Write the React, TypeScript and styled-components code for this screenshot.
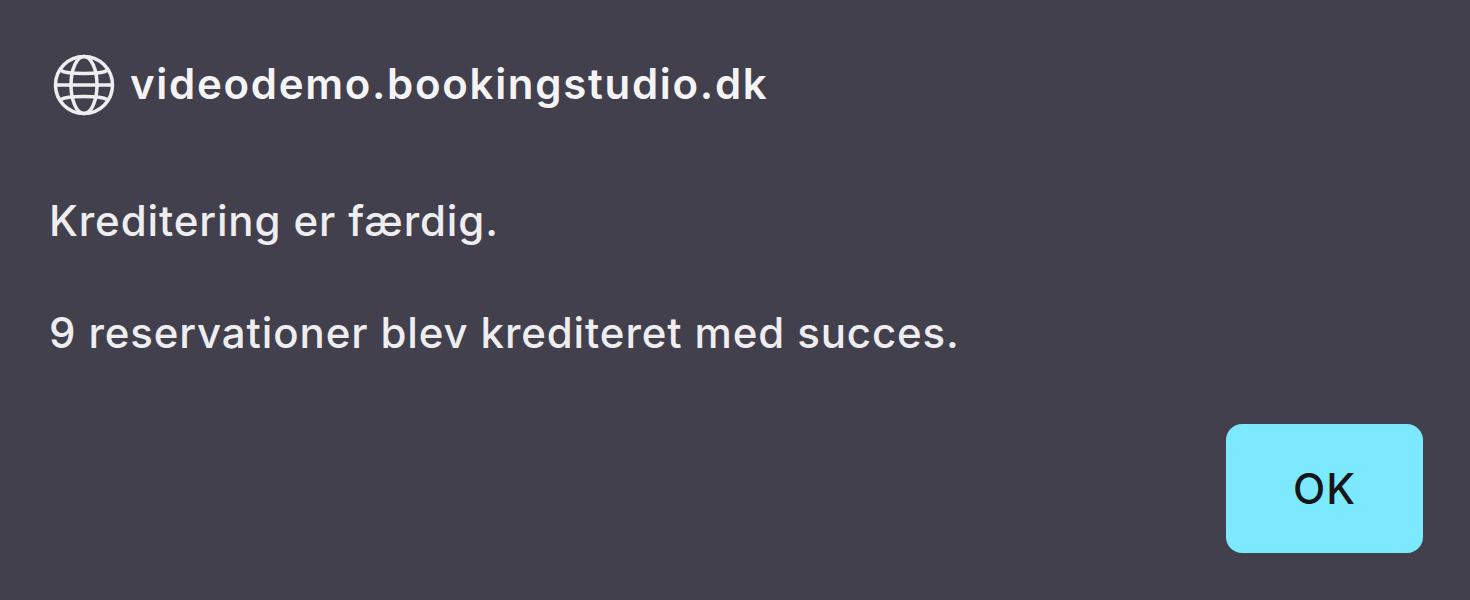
import React from 'react';
import styled, { createGlobalStyle } from 'styled-components';

const GlobalStyle = createGlobalStyle`
    html, body {
        margin: 0;
        padding: 0;
        background: #42404c;
    }
`

const Dialog = styled.div`
    box-sizing: border-box;
    width: 1470px;
    height: 600px;
    padding: 54px 47px 47px 49px;
    background: #42404c;
    color: #eeedf0;
    font-family: Inter, "Liberation Sans", sans-serif;
    display: flex;
    flex-direction: column;
`

const Origin = styled.div`
    display: flex;
    align-items: center;
    gap: 15px;
    padding-left: 4px;
    height: 62px;
    color: #f4f3f5;
`

const OriginName = styled.span`
    padding-bottom: 4px;
    font-size: 42px;
    letter-spacing: 1.7px;
    font-weight: 600;
`

const Message = styled.p`
    margin: 0;
    font-size: 42px;
    letter-spacing: 0.88px;
    line-height: 46px;
    font-weight: 500;
`

const Messages = styled.div`
    display: flex;
    flex-direction: column;
    gap: 66px;
    margin-top: 82px;
`

const Footer = styled.div`
    display: flex;
    justify-content: flex-end;
    margin-top: auto;
`

const OkButton = styled.button`
    width: 197px;
    height: 129px;
    border: none;
    border-radius: 16px;
    background: #7ce9fe;
    color: #14161a;
    font-family: Inter, "Liberation Sans", sans-serif;
    font-size: 42px;
    letter-spacing: 1px;
    font-weight: 500;
`

const GlobeIcon: React.FC = () => (
    <svg width="62" height="62" viewBox="0 0 62 62" fill="none" stroke="#eeedf0" strokeWidth="3.5">
        <circle cx="31" cy="31" r="28.5" />
        <ellipse cx="31" cy="31" rx="13" ry="28.5" />
        <path d="M3 31h56M8 16.5c6 4 40 4 46 0M8 45.5c6-4 40-4 46 0" />
    </svg>
)

const App: React.FC = () => {
    return (
        <>
            <GlobalStyle />
            <Dialog>
                <Origin>
                    <GlobeIcon />
                    <OriginName>videodemo.bookingstudio.dk</OriginName>
                </Origin>
                <Messages>
                    <Message>Kreditering er færdig.</Message>
                    <Message>9 reservationer blev krediteret med succes.</Message>
                </Messages>
                <Footer>
                    <OkButton>OK</OkButton>
                </Footer>
            </Dialog>
        </>
    )
}

export default App;
